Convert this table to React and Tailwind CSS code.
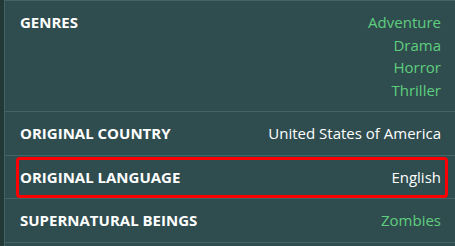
import React from 'react';

const rows = [
  { label: 'Genres', values: ['Adventure', 'Drama', 'Horror', 'Thriller'], link: true },
  { label: 'Original country', values: ['United States of America'] },
  { label: 'Original language', values: ['English'], highlight: true },
  { label: 'Supernatural beings', values: ['Zombies'], link: true },
];

export default function App() {
  return (
    <div className="w-[455px] h-[246px] overflow-hidden bg-[#2f4d4f] flex font-['Open_Sans',sans-serif] text-[15px] leading-[22.5px]">
      <div className="w-[4px] shrink-0 bg-[#243835]" />
      <div className="flex-1 border-l border-t border-[#436466]">
        {rows.map(({ label, values, link, highlight }) => (
          <div key={label} className="relative flex justify-between pl-[15px] pr-[14px] py-[10px] border-b border-[#436466]">
            <span className="font-bold uppercase text-white">{label}</span>
            <div className="flex flex-col items-end">
              {values.map((v) => (
                <span key={v} className={link ? 'text-[#5fcd7e]' : 'text-white'}>{v}</span>
              ))}
            </div>
            {highlight && (
              <div className="absolute left-[11px] right-[7px] top-[1px] bottom-0 border-[3px] border-[#ff0000] rounded-[4px]" />
            )}
          </div>
        ))}
      </div>
    </div>
  );
}
